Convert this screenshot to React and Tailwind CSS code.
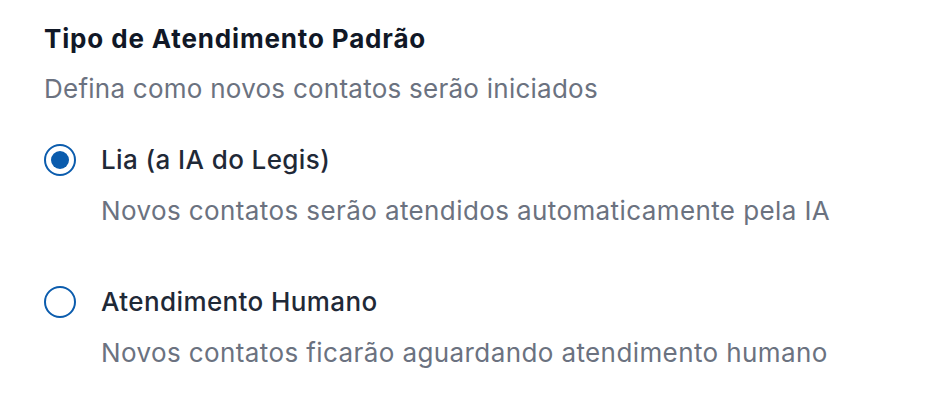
import React, { useState } from "react";

const options = [
  {
    id: "ia",
    label: "Lia (a IA do Legis)",
    description: "Novos contatos serão atendidos automaticamente pela IA",
  },
  {
    id: "humano",
    label: "Atendimento Humano",
    description: "Novos contatos ficarão aguardando atendimento humano",
  },
];

export default function App() {
  const [selected, setSelected] = useState("ia");

  return (
    <div
      className="min-h-screen w-full bg-white px-[44px] pt-[23px] text-[26px] tracking-[0.4px]"
      style={{ fontFamily: "Inter, 'Noto Sans', sans-serif" }}
    >
      <h2 className="leading-[32px] font-bold text-[#111827] tracking-[0.85px]">
        Tipo de Atendimento Padrão
      </h2>
      <p className="mt-[18px] leading-[32px] text-[#6b7280] tracking-[0.25px]">
        Defina como novos contatos serão iniciados
      </p>

      <div className="mt-[39px] flex flex-col gap-[59px]">
        {options.map((opt) => {
          const active = selected === opt.id;
          return (
            <label
              key={opt.id}
              className="flex cursor-pointer items-start gap-[25px]"
              onClick={() => setSelected(opt.id)}
            >
              <span className="flex h-[32px] w-[32px] shrink-0 items-center justify-center rounded-full border-2 border-[#0b5cad] bg-white">
                {active && (
                  <span className="h-[18px] w-[18px] rounded-full bg-[#0b5cad]" />
                )}
              </span>
              <span className="flex flex-col">
                <span className="leading-[32px] font-medium text-[#1f2937]">
                  {opt.label}
                </span>
                <span className="mt-[19px] leading-[32px] text-[#6b7280]">
                  {opt.description}
                </span>
              </span>
            </label>
          );
        })}
      </div>
    </div>
  );
}
